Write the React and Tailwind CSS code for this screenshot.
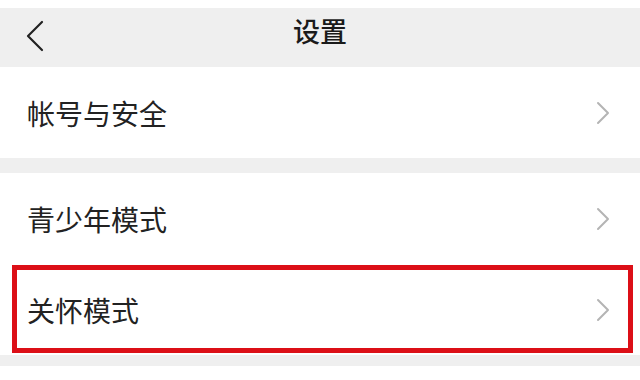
import React from "react";

function Chevron() {
  return (
    <svg width="16" height="24" viewBox="0 0 16 24" className="shrink-0">
      <path d="M3 2 L13 12 L3 22" fill="none" stroke="#b4b4b4" strokeWidth="2" strokeLinecap="round" strokeLinejoin="round" />
    </svg>
  );
}

function Row({ label, h }) {
  return (
    <div className={`flex items-center justify-between bg-white pl-[27px] pr-[29px] ${h}`}>
      <span className="text-[28px] leading-none text-[#222]">{label}</span>
      <Chevron />
    </div>
  );
}

export default function App() {
  return (
    <div
      className="w-[640px] h-[380px] bg-white overflow-hidden flex flex-col"
      style={{ fontFamily: '"Noto Sans CJK SC", "Noto Sans", sans-serif' }}
    >
      <div className="h-[8px] bg-white" />
      <div className="relative h-[59px] bg-[#efefef] flex items-center justify-center">
        <svg width="24" height="34" viewBox="0 0 24 34" className="absolute left-[23px] top-[10px]">
          <path d="M19 4 L5 18 L19 32" fill="none" stroke="#222" strokeWidth="2.2" strokeLinecap="round" strokeLinejoin="round" />
        </svg>
        <span className="text-[27px] font-medium leading-none text-[#1a1a1a] -mt-[14px]">设置</span>
      </div>
      <Row label="帐号与安全" h="h-[91px]" />
      <div className="h-[15px] bg-[#efefef]" />
      <Row label="青少年模式" h="h-[92px]" />
      <div className="relative">
        <Row label="关怀模式" h="h-[90px]" />
        <div className="absolute left-[12px] right-[7px] top-0 bottom-[2px] border-[5px] border-[#dc0f17]" />
      </div>
      <div className="h-[11px] bg-[#efefef]" />
      <div className="flex-1 bg-white" />
    </div>
  );
}
